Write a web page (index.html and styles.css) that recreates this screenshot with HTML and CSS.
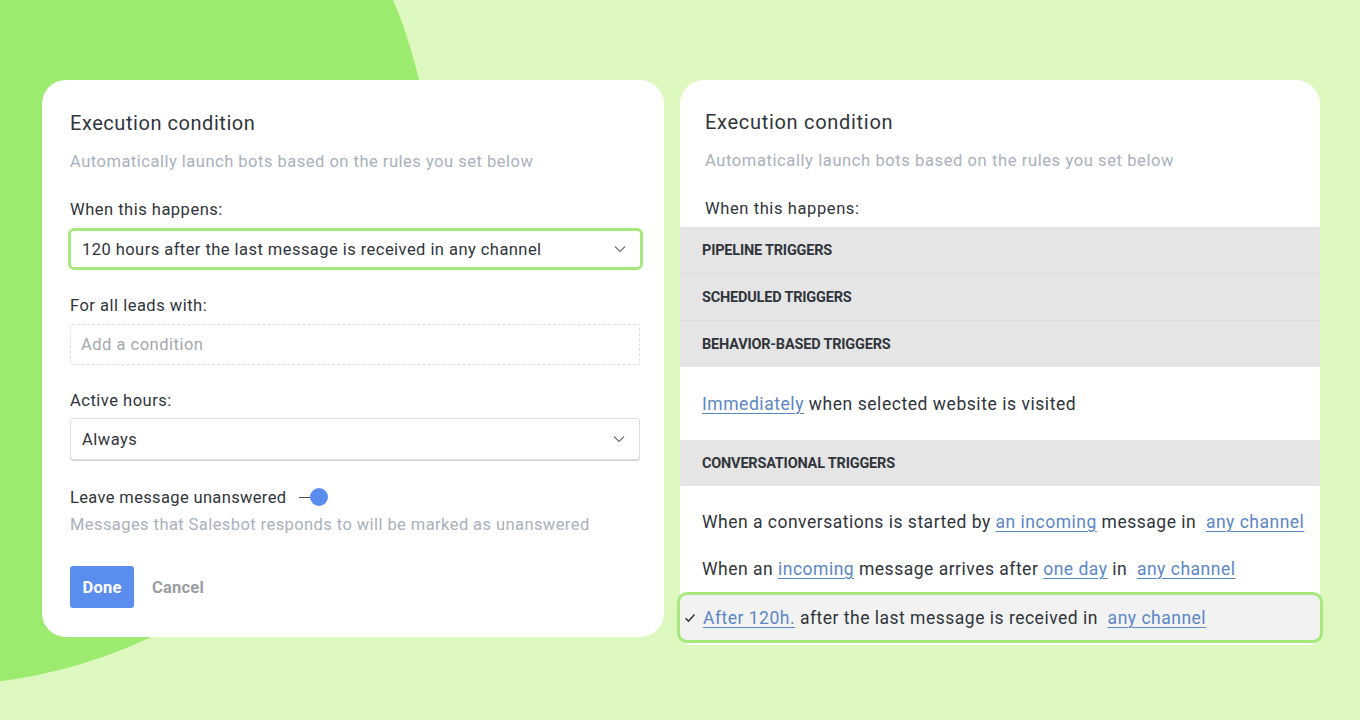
FILE: index.html
```html
<!DOCTYPE html>
<html lang="en">
<head>
<meta charset="utf-8">
<title>Execution condition</title>
<link rel="stylesheet" href="styles.css">
</head>
<body>
<div class="blob"></div>
<main class="stage">
  <section class="card card-left">
    <h2 class="title">Execution condition</h2>
    <p class="hint">Automatically launch bots based on the rules you set below</p>

    <label class="label l-when">When this happens:</label>
    <div class="select select-active">
      <span>120 hours after the last message is received in any channel</span>
      <svg class="chev" width="12" height="8" viewBox="0 0 12 8"><path d="M1 1.5 L6 6.5 L11 1.5" fill="none" stroke="#6b6f75" stroke-width="1.1"/></svg>
    </div>

    <label class="label l-leads">For all leads with:</label>
    <div class="condition">Add a condition</div>

    <label class="label l-hours">Active hours:</label>
    <div class="select select-plain">
      <span>Always</span>
      <svg class="chev" width="12" height="8" viewBox="0 0 12 8"><path d="M1 1.5 L6 6.5 L11 1.5" fill="none" stroke="#6b6f75" stroke-width="1.1"/></svg>
    </div>

    <div class="toggle-row">
      <span class="label-inline">Leave message unanswered</span>
      <span class="toggle"><span class="toggle-line"></span><span class="toggle-knob"></span></span>
    </div>
    <p class="hint hint-2">Messages that Salesbot responds to will be marked as unanswered</p>

    <div class="actions">
      <button class="btn-done">Done</button>
      <button class="btn-cancel">Cancel</button>
    </div>
  </section>

  <section class="card card-right">
    <div class="head">
      <h2 class="title">Execution condition</h2>
      <p class="hint">Automatically launch bots based on the rules you set below</p>
      <label class="label l-when">When this happens:</label>
    </div>
    <div class="group">PIPELINE TRIGGERS</div>
    <div class="group sep">SCHEDULED TRIGGERS</div>
    <div class="group sep">BEHAVIOR-BASED TRIGGERS</div>
    <div class="option option-tall"><span><a class="lnk">Immediately</a> when selected website is visited</span></div>
    <div class="group">CONVERSATIONAL TRIGGERS</div>
    <div class="options">
      <div class="option"><span>When a conversations is started by <a class="lnk">an incoming</a> message in&nbsp; <a class="lnk">any channel</a></span></div>
      <div class="option"><span>When an <a class="lnk">incoming</a> message arrives after <a class="lnk">one day</a> in&nbsp; <a class="lnk">any channel</a></span></div>
      <div class="option option-selected">
        <svg class="check" width="12" height="10" viewBox="0 0 12 10"><path d="M1.5 5.2 L4.5 8.2 L10.5 1.5" fill="none" stroke="#2b2f33" stroke-width="1.4"/></svg>
        <span><a class="lnk">After 120h.</a> after the last message is received in&nbsp; <a class="lnk">any channel</a></span>
      </div>
    </div>
  </section>
</main>
</body>
</html>
```

FILE: styles.css
```css
* { box-sizing: border-box; }
html, body { margin: 0; padding: 0; }
body {
  width: 1360px;
  height: 720px;
  overflow: hidden;
  position: relative;
  background: #def9bf;
  font-family: "Roboto", "Liberation Sans", sans-serif;
  color: #30353b;
}
.blob {
  position: absolute;
  left: -554px;
  top: -301px;
  width: 986px;
  height: 986px;
  border-radius: 50%;
  background: #9deb6e;
}
.stage {
  position: relative;
  display: flex;
  align-items: flex-start;
  gap: 16px;
  padding: 80px 0 0 42px;
}
.card {
  background: #fff;
  border-radius: 24px;
}
.card-left {
  width: 622px;
  height: 557px;
  padding: 31px 24px 0 28px;
  display: flex;
  flex-direction: column;
  letter-spacing: 0.5px;
}
.title {
  margin: 0;
  font-size: 20px;
  line-height: 24px;
  font-weight: 400;
  color: #30353b;
  letter-spacing: 0.55px;
}
.hint {
  margin: 17px 0 0;
  font-size: 16.5px;
  line-height: 20px;
  color: #a9b1bd;
}
.label {
  display: block;
  font-size: 16.5px;
  line-height: 20px;
  color: #30353b;
}
.l-when { margin-top: 28px; }
.l-leads, .l-hours { margin-top: 26px; }
.select {
  display: flex;
  align-items: center;
  justify-content: space-between;
  height: 42px;
  background: #fff;
  font-size: 16.5px;
  color: #30353b;
}
.select-active {
  margin: 8px -3px 0 -2px;
  border: 3px solid #a6e87c;
  border-radius: 6px;
  padding: 0 14px 0 11px;
  letter-spacing: 0.45px;
}
.select-plain {
  margin-top: 7px;
  border: 1px solid #dcdee0;
  border-radius: 3px;
  box-shadow: 0 1px 0 #cfd1d4;
  padding: 0 14px 0 11px;
}
.chev { display: block; }
.condition {
  margin-top: 8px;
  height: 41px;
  border: 1px dashed #dcdee1;
  border-radius: 2px;
  padding: 0 10px;
  display: flex;
  align-items: center;
  font-size: 16.5px;
  color: #a3a8ad;
}
.toggle-row {
  margin-top: 27px;
  display: flex;
  align-items: center;
  height: 20px;
  font-size: 16.5px;
  letter-spacing: 0.35px;
}
.toggle {
  display: flex;
  align-items: center;
  margin-left: 13px;
}
.toggle-line {
  width: 11px;
  height: 1px;
  background: #4b5058;
}
.toggle-knob {
  width: 18px;
  height: 18px;
  border-radius: 50%;
  background: #5b8def;
}
.hint-2 { margin-top: 8px; letter-spacing: 0.42px; }
.actions {
  margin-top: 31px;
  display: flex;
  align-items: center;
}
.btn-done {
  width: 64px;
  height: 42px;
  border: 0;
  border-radius: 3px;
  background: #5b8def;
  color: #fff;
  font-family: inherit;
  font-size: 16.5px;
  font-weight: 700;
  letter-spacing: 0.2px;
  padding: 0;
}
.btn-cancel {
  border: 0;
  background: none;
  color: #9a9ea3;
  font-family: inherit;
  font-size: 16.5px;
  font-weight: 700;
  letter-spacing: 0.2px;
  margin-left: 18px;
  padding: 0;
}

.card-right {
  width: 640px;
  border-radius: 24px 24px 12px 12px;
  padding-bottom: 2px;
  letter-spacing: 0.6px;
}
.card-right .title { letter-spacing: 0.7px; }
.head {
  padding: 30px 25px 8px;
}
.head .hint { margin-top: 17px; }
.group {
  height: 46px;
  background: #e5e5e5;
  display: flex;
  align-items: center;
  padding-left: 22px;
  font-size: 14.5px;
  font-weight: 700;
  color: #30353b;
  letter-spacing: -0.2px;
}
.group.sep {
  height: 47px;
  border-top: 1px solid #dcdcdc;
}
.option {
  display: flex;
  align-items: center;
  height: 47px;
  padding-left: 22px;
  font-size: 17.5px;
  letter-spacing: 0.5px;
  color: #30353b;
  white-space: nowrap;
}
.option-tall { height: 73px; letter-spacing: 0.55px; }
.options { padding-top: 12px; }
.lnk {
  color: #5b87c6;
  text-decoration: underline;
  text-underline-offset: 3px;
  text-decoration-thickness: 1px;
}
.option-selected {
  height: 51px;
  margin: 0 -3px;
  border: 3px solid #a6e87c;
  border-radius: 10px;
  background: #f2f2f2;
  padding-left: 4px;
}
.check { margin-right: 7px; flex: none; }
```
